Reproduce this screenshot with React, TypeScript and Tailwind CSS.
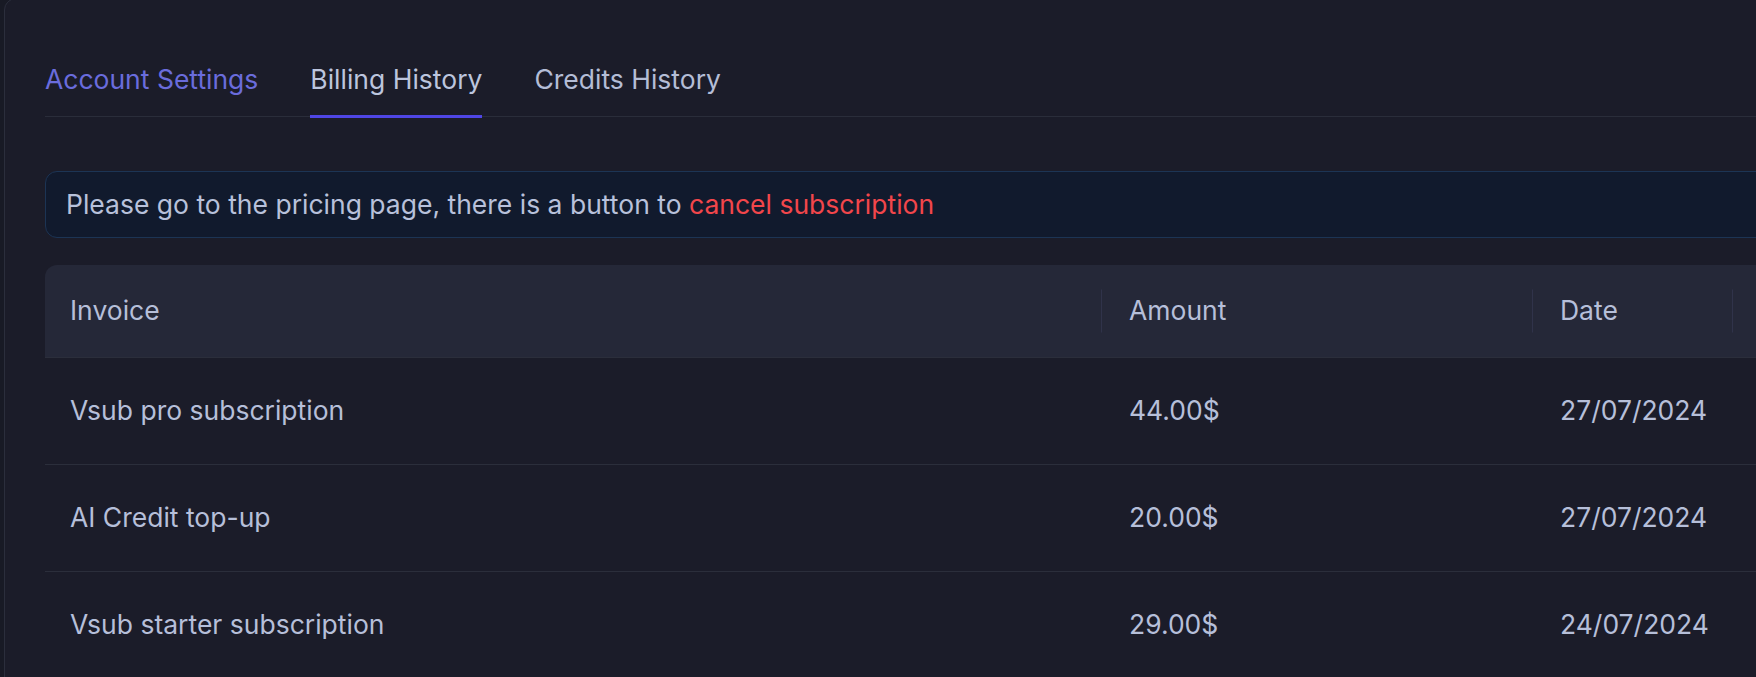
const TABS = [
  { label: 'Account Settings', state: 'link' },
  { label: 'Billing History', state: 'active' },
  { label: 'Credits History', state: 'idle' },
]

const ROWS = [
  { invoice: 'Vsub pro subscription', amount: '44.00$', date: '27/07/2024' },
  { invoice: 'AI Credit top-up', amount: '20.00$', date: '27/07/2024' },
  { invoice: 'Vsub starter subscription', amount: '29.00$', date: '24/07/2024' },
]

const COLS = 'grid grid-cols-[1057px_431px_200px_200px]'

export default function App() {
  return (
    <div
      style={{ fontFamily: 'Inter, "Noto Sans", sans-serif' }}
      className="w-[1756px] h-[677px] overflow-hidden bg-[#181a25] pl-[4px]"
    >
      <div className="w-[1900px] h-[720px] -mt-[2px] bg-[#1b1c29] border border-[#2b2e3c] rounded-[12px] pt-[62px] pl-[40px]">
        {/* Tabs */}
        <div className="flex gap-[52px] border-b border-[#2a2d3a]">
          {TABS.map((t) => (
            <div
              key={t.label}
              className={[
                'text-[26.5px] leading-[36px] pb-[18px] -mb-[2px] border-b-[3px]',
                t.state === 'active'
                  ? 'border-[#4f46e5] text-[#bcc5de]'
                  : 'border-transparent',
                t.state === 'link' ? 'text-[#6a6cdc]' : '',
                t.state === 'idle' ? 'text-[#b4bdd6]' : '',
              ].join(' ')}
            >
              {t.label}
            </div>
          ))}
        </div>

        {/* Notice */}
        <div className="mt-[54px] h-[67px] flex items-center px-[20px] bg-[#111a2d] border border-[#1c3454] rounded-[12px] text-[26.5px] text-[#b8c1db]">
          <span>
            Please go to the pricing page, there is a button to{' '}
            <span className="text-[#f2464b]">cancel subscription</span>
          </span>
        </div>

        {/* Table */}
        <div className="mt-[27px] text-[26.5px] text-[#b6bfd9]">
          <div className={`${COLS} h-[93px] bg-[#252838] rounded-t-[12px] border-b border-[#2b2e3b]`}>
            {['Invoice', 'Amount', 'Date', ''].map((h, i) => (
              <div
                key={i}
                className={`relative flex items-center ${i === 0 ? 'pl-[25px]' : 'pl-[27px]'}`}
              >
                {h}
                {i < 3 && (
                  <span className="absolute right-0 top-1/2 -translate-y-1/2 w-px h-[43px] bg-[#30334a]" />
                )}
              </div>
            ))}
          </div>
          {ROWS.map((r) => (
            <div key={r.invoice} className={`${COLS} h-[107px] border-b border-[#2b2e3b]`}>
              <div className="flex items-center pl-[25px]">{r.invoice}</div>
              <div className="flex items-center pl-[27px]">{r.amount}</div>
              <div className="flex items-center pl-[27px]">{r.date}</div>
              <div />
            </div>
          ))}
        </div>
      </div>
    </div>
  )
}
